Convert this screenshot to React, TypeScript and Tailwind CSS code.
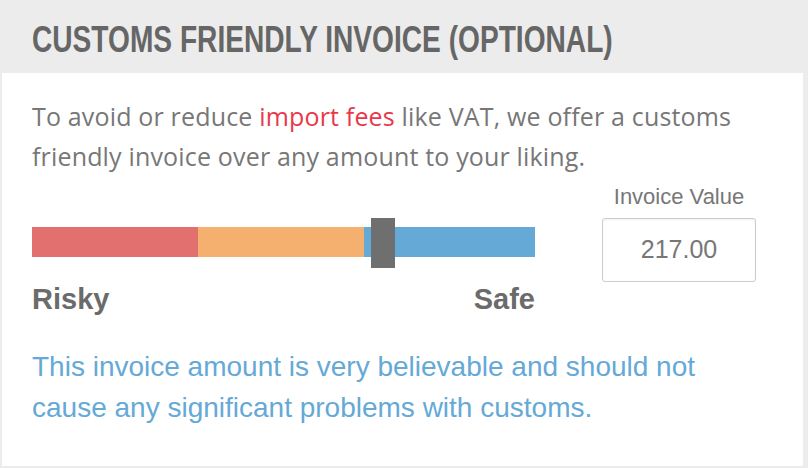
export default function App() {
  return (
    <div className="w-[808px] h-[468px] bg-[#ececec] flex flex-col">
      <div className="h-[73px] pl-[32px] pt-[5px] flex items-center">
        <h2
          className="text-[37px] leading-none font-bold text-[#666666] whitespace-nowrap origin-left scale-x-[0.76]"
          style={{ fontFamily: '"Liberation Sans", Arial, sans-serif' }}
        >
          CUSTOMS FRIENDLY INVOICE (OPTIONAL)
        </h2>
      </div>

      <div className="flex-1 bg-white ml-[2px] mr-[5px] mb-[2px] pl-[30px] pt-[23px]">
        <p
          className="text-[25px] leading-[40px] tracking-[0.17px] text-[#777777]"
          style={{ fontFamily: '"Open Sans", sans-serif' }}
        >
          To avoid or reduce <span className="text-[#e8394a]">import fees</span> like VAT, we offer a customs
          <br />
          friendly invoice over any amount to your liking.
        </p>

        <div className="flex items-start mt-[9px]" style={{ fontFamily: '"Liberation Sans", Arial, sans-serif' }}>
          <div className="w-[503px]">
            <div className="relative mt-[42px] h-[30px] flex">
              <div className="w-[166px] bg-[#e2706f]" />
              <div className="w-[166px] bg-[#f5b070]" />
              <div className="flex-1 bg-[#65a9d7]" />
              <div className="absolute left-[339px] -top-[9px] w-[24px] h-[50px] bg-[#6f6f6f]" />
            </div>
            <div className="mt-[25px] flex justify-between text-[29px] leading-[34px] font-bold text-[#6b6b6b]">
              <span>Risky</span>
              <span>Safe</span>
            </div>
          </div>

          <div className="ml-[67px] w-[154px] flex flex-col items-center">
            <div className="text-[22px] leading-[24px] text-[#777777] whitespace-nowrap">Invoice Value</div>
            <div className="mt-[9px] w-[154px] h-[64px] border border-[#cccccc] rounded-[3px] shadow-[inset_0_1px_2px_rgba(0,0,0,0.06)] flex items-center justify-center text-[25px] text-[#777777]">
              217.00
            </div>
          </div>
        </div>

        <p
          className="mt-[30px] text-[28px] leading-[41px] text-[#65a9d7]"
          style={{ fontFamily: '"Liberation Sans", Arial, sans-serif' }}
        >
          This invoice amount is very believable and should not
          <br />
          cause any significant problems with customs.
        </p>
      </div>
    </div>
  );
}
